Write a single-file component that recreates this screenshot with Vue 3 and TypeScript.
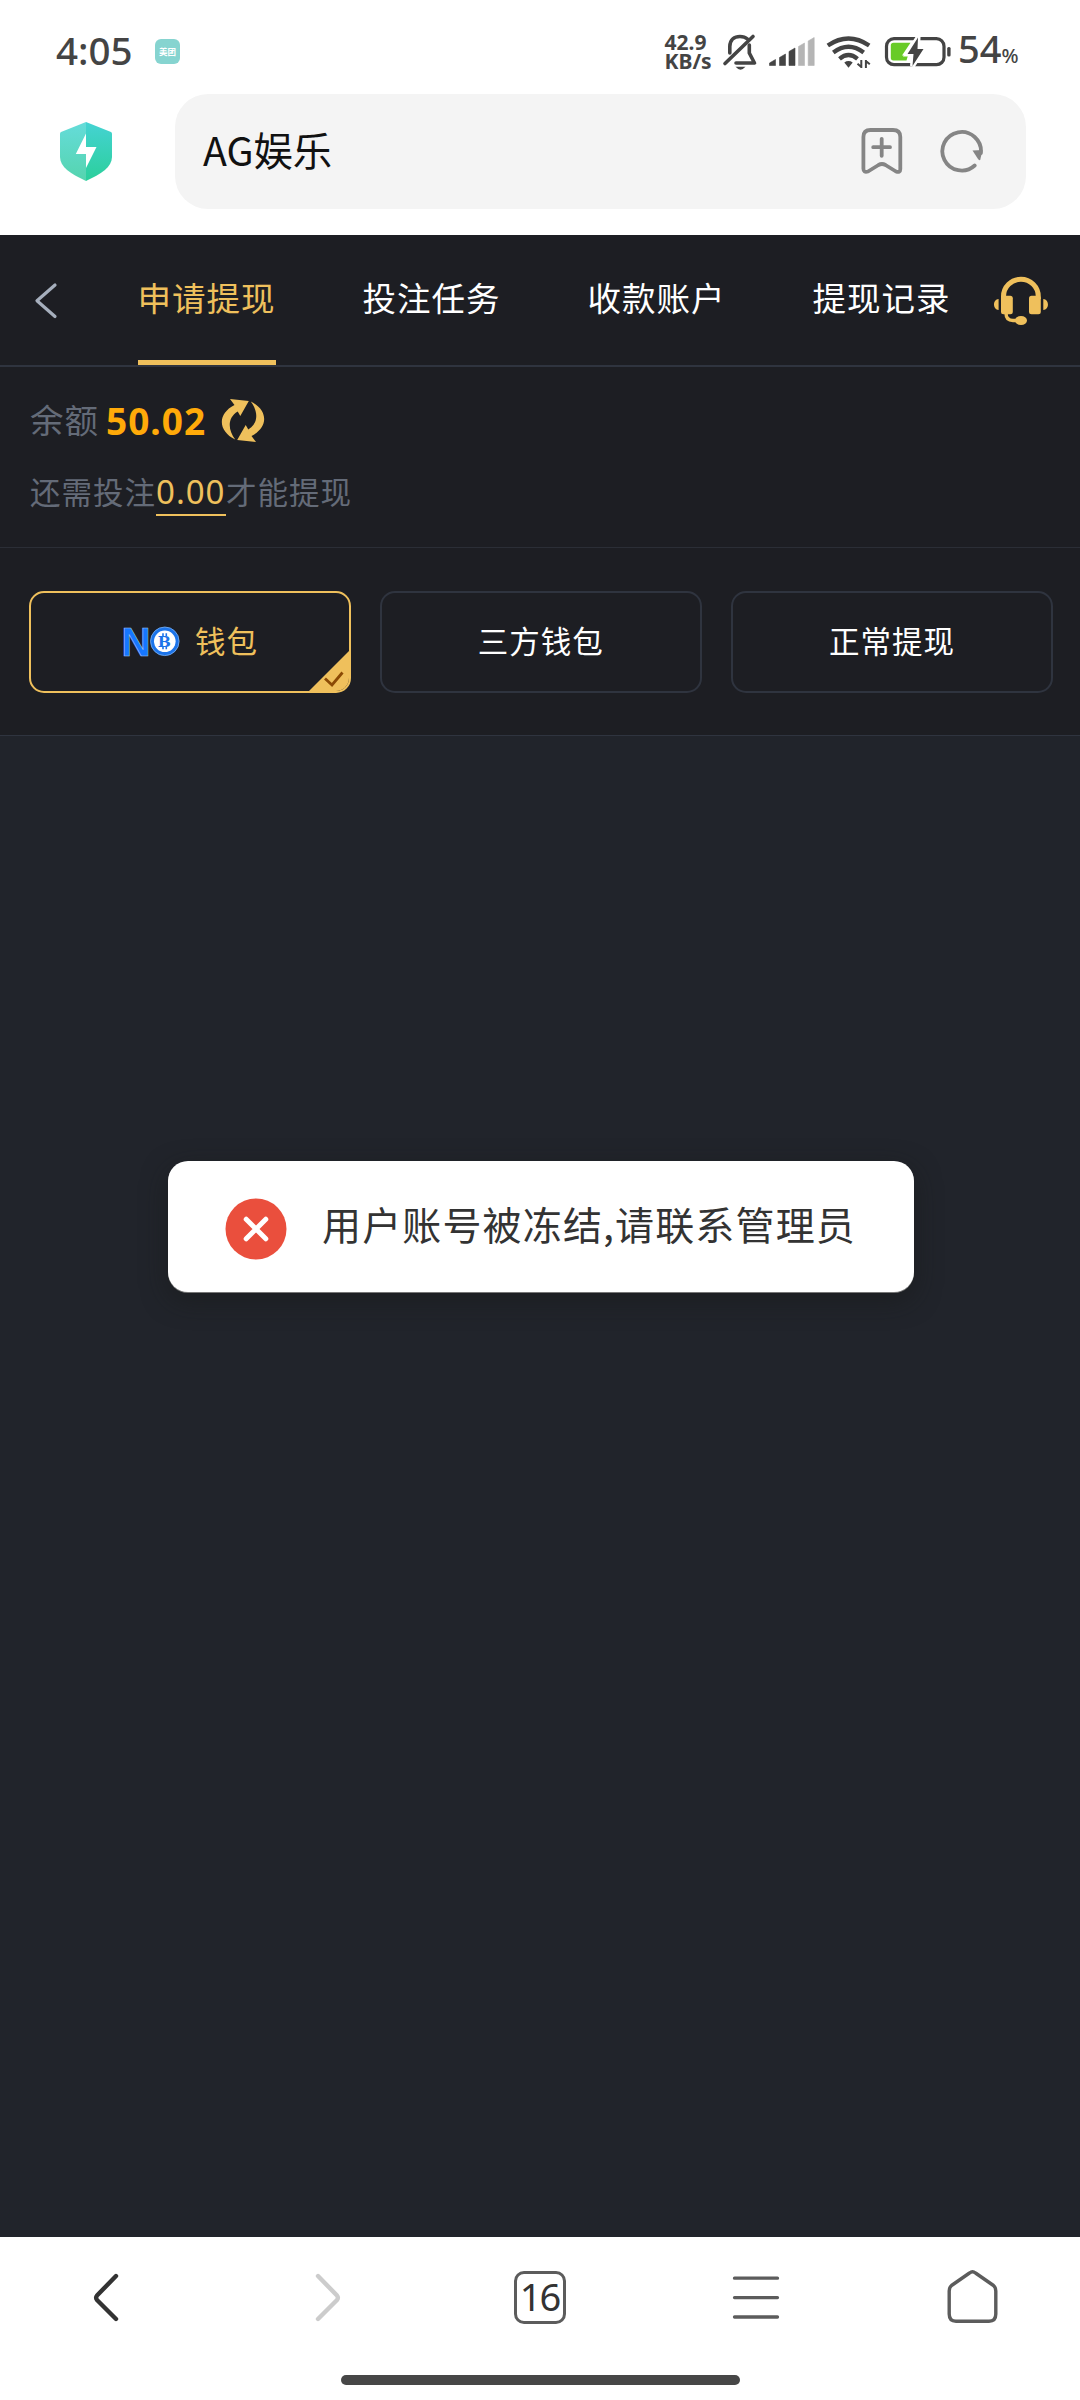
<script setup lang="ts">
import { ref } from 'vue'

interface Signal { x: number; top: number; on: boolean }

const tabs: string[] = ['申请提现', '投注任务', '收款账户', '提现记录']
const activeTab = ref(0)

const methods: string[] = ['钱包', '三方钱包', '正常提现']
const activeMethod = ref(0)

const signal: Signal[] = [
  { x: 770, top: 59.5, on: true },
  { x: 780, top: 54, on: true },
  { x: 789.5, top: 48, on: true },
  { x: 799, top: 43, on: false },
  { x: 808.7, top: 37.5, on: false },
]
</script>

<template>
  <div class="screen">
    <header class="status">
      <span class="time">4:05</span>
      <span class="app-badge">美团</span>
      <span class="speed"><b>42.9</b><b>KB/s</b></span>
      <svg class="bell" width="36" height="40" viewBox="722 31 36 40" fill="none" stroke="#444" stroke-width="3.6" stroke-linecap="round" stroke-linejoin="round">
        <path d="M729.8 52V45.500C730 38.500 734.500 35.500 740 35.500C743 35.500 745.500 36.300 747.500 38M749.300 44V52L754.500 62H736" />
        <path d="M753 35.500L725 62.500" />
        <path d="M735.500 65.800H745.500Q740.500 71.500 735.500 65.800Z" fill="#444" stroke="none" />
      </svg>
      <svg class="signal" width="46" height="30" viewBox="769.500 37 46 30">
        <path v-for="s in signal" :key="s.x" :d="`M${s.x} ${s.top + 3.5}L${s.x + 6} ${s.top}V65.500H${s.x}Z`" :fill="s.on ? '#444' : '#b5b5b5'" :stroke="s.on ? '#444' : '#b5b5b5'" stroke-width=".6" stroke-linejoin="round" />
      </svg>
      <svg class="wifi" width="46" height="34" viewBox="826.500 34 46 34" fill="none" stroke="#444" stroke-width="4.300">
        <path d="M828.300 44.500Q849 30.500 869.700 44.500" />
        <path d="M833.800 51.500Q849 40 864.200 51.500" />
        <path d="M840 57.800Q849 50.300 858 57.800" />
        <path d="M844.800 61.500Q849 58.600 853.200 61.500L849 66.800Z" fill="#444" stroke="none" />
        <path d="M861.800 59V67M861.800 66L858 62.800M866.400 67V59M866.400 60L870.300 63.300" stroke-width="2" />
      </svg>
      <svg class="battery" width="68" height="32" viewBox="884.500 35 68 32">
        <rect x="887" y="37.700" width="57.500" height="26" rx="7.500" fill="none" stroke="#444" stroke-width="3.200" />
        <path d="M894 41.800H911L902.500 54.500H908.500L907 59.500H894Q891.300 59.500 891.300 56.800V44.500Q891.300 41.800 894 41.800Z" fill="#68cb27" />
        <path d="M918.500 36.500L908 53H914L913 65L924 48H918Z" fill="#444" stroke="#fff" stroke-width="5" paint-order="stroke" />
        <rect x="947.700" y="46" width="3.400" height="9.500" rx="1.500" fill="#444" />
      </svg>
      <span class="percent">54<small>%</small></span>
    </header>

    <div class="address">
      <svg class="shield" width="54" height="62" viewBox="59 121 54 62">
        <defs>
          <linearGradient id="shieldLeft" x1="0" y1="0" x2="0" y2="1"><stop stop-color="#65dcda" /><stop offset="1" stop-color="#55d4ae" /></linearGradient>
          <linearGradient id="shieldRight" x1="0" y1="0" x2="0" y2="1"><stop stop-color="#45d3d3" /><stop offset="1" stop-color="#2bcf9b" /></linearGradient>
        </defs>
        <path d="M86 122L61 132Q60 132.500 60 134V157C60 167 71 174 86 181Z" fill="url(#shieldLeft)" />
        <path d="M86 122L111 132Q112 132.500 112 134V157C112 167 101 174 86 181Z" fill="url(#shieldRight)" />
        <path d="M86 133.500L75.800 154H86V168L96.500 147H86Z" fill="#fff" />
      </svg>
      <div class="search">
        <span class="site">AG娱乐</span>
        <svg width="42" height="48" viewBox="861.500 127 42 48" fill="none" stroke="#858585" stroke-width="3.800" stroke-linecap="round" stroke-linejoin="round">
          <path d="M863.900 137Q863.900 130 871 130H893.500Q900.800 130 900.800 137V169Q900.800 173 896.500 171.500L886 165Q882.400 163 879 165L868.500 171.500Q863.900 173 863.900 168.500Z" />
          <path d="M873.700 147.200H890.500M882.200 138.800V155.800" />
        </svg>
        <svg class="reload" width="44" height="44" viewBox="941 129 44 44">
          <path d="M975.700 165.500A19.300 19.300 0 1 1 981.900 153" fill="none" stroke="#858585" stroke-width="3.800" stroke-linecap="round" />
          <path d="M973.500 150.500L983.500 150L981.200 160Q980 160.500 979 159Z" fill="#858585" />
        </svg>
      </div>
    </div>

    <main>
      <nav class="tabs">
        <svg class="back" width="26" height="40" viewBox="33 281 26 40" fill="none" stroke="#a6afbd" stroke-width="3.200" stroke-linecap="round" stroke-linejoin="round"><path d="M55 285L37 300.700L55 316.500" /></svg>
        <div class="tab-list">
          <button v-for="(tab, i) in tabs" :key="tab" :class="{ active: i === activeTab }" @click="activeTab = i">{{ tab }}</button>
        </div>
        <svg class="service" width="56" height="50" viewBox="993 275 56 50" fill="#efc05c">
          <path d="M1003.500 298V295.500A17.400 17.200 0 0 1 1038.300 295.500V298" fill="none" stroke="#efc05c" stroke-width="5" />
          <rect x="1001" y="294.700" width="11.800" height="18.500" rx="2.500" />
          <rect x="1029" y="294.700" width="11.800" height="18.500" rx="2.500" />
          <path d="M998.600 298V309C992.500 308.500 992.500 298.500 998.600 298ZM1043.300 298V309C1049.500 308.500 1049.500 298.500 1043.300 298Z" />
          <path d="M1006 312Q1006 319.500 1013 319.500H1019" fill="none" stroke="#efc05c" stroke-width="3.400" />
          <ellipse cx="1021" cy="319.500" rx="6" ry="4.600" />
        </svg>
      </nav>

      <section class="balance">
        <div class="amount">
          <span>余额</span><strong>50.02</strong>
          <svg width="44" height="45" viewBox="221 398 44 45" fill="#efc05c">
            <path d="M230 399L248.800 401L240.300 416L237.700 411.500C227 418 228 430 235.200 439.500C218 431 217 414 234.500 405Z" />
            <path d="M230 399L248.800 401L240.300 416L237.700 411.500C227 418 228 430 235.200 439.500C218 431 217 414 234.500 405Z" transform="rotate(180 243 420.500)" />
          </svg>
        </div>
        <p class="need">还需投注<u>0.00</u>才能提现</p>
      </section>

      <section class="methods">
        <button v-for="(m, i) in methods" :key="m" :class="['method', { active: i === activeMethod }]" @click="activeMethod = i">
          <svg v-if="i === 0" class="logo" width="60" height="32" viewBox="121 626 60 32">
            <text x="121.500" y="655.800" textLength="30" lengthAdjust="spacingAndGlyphs" font-family="Liberation Sans, sans-serif" font-weight="700" font-size="41" fill="#1677ff" stroke="#9cc4f5" stroke-width=".6">N</text>
            <circle cx="164.800" cy="641.300" r="14.300" fill="#1c74ea" stroke="#7fb2f3" stroke-width=".8" />
            <circle cx="164.800" cy="641.300" r="10.800" fill="#fff" />
            <text x="164.800" y="647" text-anchor="middle" font-family="DejaVu Serif, serif" font-weight="700" font-size="15.500" fill="#1c74ea">B</text>
            <path d="M163 633.200V636M166.300 633.200V636M163 646.500V649.300M166.300 646.500V649.300" stroke="#1c74ea" stroke-width="1.600" />
          </svg>
          <span>{{ m }}</span>
          <svg v-if="i === activeMethod" class="tick" width="42" height="42" viewBox="0 0 42 42">
            <path d="M42 0V42H0Z" fill="#efc05c" />
            <path d="M17 28.500L24 35L34.500 22.500" fill="none" stroke="#8b4a05" stroke-width="2.800" />
          </svg>
        </button>
      </section>
    </main>

    <div class="toast">
      <svg width="62" height="62" viewBox="0 0 62 62">
        <circle cx="31" cy="31" r="30.500" fill="#ea4f3d" />
        <path d="M21.200 21.200L40.800 40.800M40.800 21.200L21.200 40.800" stroke="#fff" stroke-width="5" stroke-linecap="round" />
      </svg>
      <span>用户账号被冻结,请联系管理员</span>
    </div>

    <footer class="toolbar">
      <div class="actions">
        <svg width="52" height="56" viewBox="80 2269 52 56" fill="none" stroke="#333" stroke-width="4.400" stroke-linecap="round" stroke-linejoin="round"><path d="M116 2276L97 2295.500Q95.300 2297.700 97 2300L116 2319" /></svg>
        <svg class="forward" width="52" height="56" viewBox="302 2269 52 56" fill="none" stroke="#ccc" stroke-width="4.400" stroke-linecap="round" stroke-linejoin="round"><path d="M318 2276L337 2295.500Q338.700 2297.700 337 2300L318 2319" /></svg>
        <span class="count">16</span>
        <svg class="menu" width="52" height="56" viewBox="730 2269 52 56" stroke="#5c5c5c" stroke-width="3.300" stroke-linecap="round"><path d="M734.500 2278.200H777.500M734.500 2297.600H777.500M734.500 2317H777.500" /></svg>
        <svg class="home" width="54" height="56" viewBox="945 2269 54 56" fill="none" stroke="#5c5c5c" stroke-width="3.400" stroke-linejoin="round"><path d="M969.500 2273L951.500 2285.500Q949.200 2287.500 949.200 2291V2314Q949.200 2321.200 956 2321.200H989Q995.800 2321.200 995.800 2314V2291Q995.800 2287.500 993.500 2285.500L975.500 2273Q972.500 2270.700 969.500 2273Z" /></svg>
      </div>
      <i class="home-pill"></i>
    </footer>
  </div>
</template>

<style>
body { background: #fff; }
</style>

<style scoped>
.screen {
  position: relative;
  box-sizing: border-box;
  display: flex;
  flex-direction: column;
  width: 1080px;
  height: 2400px;
  overflow: hidden;
  background: #fff;
  font-family: "Noto Sans", "Noto Sans CJK SC", sans-serif;
}
svg { display: block; flex: none; }
button { margin: 0; padding: 0; border: 0; background: none; color: inherit; font: inherit; }
.status {
  display: flex;
  align-items: center;
  height: 94px;
  padding: 9px 0 0 56px;
  box-sizing: border-box;
  color: #444;
}
.time { width: 99px; margin-top: -3px; font-size: 38.500px; font-weight: 500; line-height: 50px; }
.app-badge {
  width: 25px;
  height: 25px;
  border-radius: 6px;
  background: #86d4d0;
  color: #fff;
  font: 700 8.5px/25px "Noto Sans CJK SC", sans-serif;
  text-align: center;
}
.speed { width: 57px; margin: 1px 0 0 484.500px; font-size: 21px; line-height: 19px; }
.speed b { display: block; font-weight: 700; }
.signal { margin-left: 11.500px; }
.wifi { margin-left: 11px; }
.battery { margin-left: 12px; }
.percent { margin-left: 6px; font-size: 38px; font-weight: 500; line-height: 50px; white-space: nowrap; }
.percent small { font-size: 20px; }
.address { display: flex; height: 141px; }
.shield { margin: 27px 62px 0 59px; }
.search {
  display: flex;
  align-items: center;
  box-sizing: border-box;
  width: 851px;
  height: 115px;
  padding: 0 42px 0 28px;
  border-radius: 33px;
  background: #f4f4f4;
}
.search svg { margin-top: -1px; }
.site { flex: 1; margin-top: -6px; color: #111; font: 400 39.300px/60px "Noto Sans CJK SC", sans-serif; }
.search .reload { margin-left: 37.500px; }
main { display: flex; flex-direction: column; height: 2002px; background: #21242b; }
.tabs {
  display: flex;
  box-sizing: border-box;
  height: 132px;
  border-bottom: 2px solid #2f343f;
  background: #1d1e23;
  color: #fff;
}
.back { margin: 46px 78.500px 0 33px; }
.tab-list { display: flex; width: 812px; gap: 87px; }
.tab-list button {
  flex: none;
  width: 138px;
  height: 130px;
  box-sizing: border-box;
  padding-bottom: 6px;
  font: 400 33.500px/50px "Noto Sans CJK SC", sans-serif;
  letter-spacing: 1px;
  white-space: nowrap;
}
.tab-list .active {
  color: #efc05c;
  background: linear-gradient(#efc05c, #efc05c) bottom / 100% 5px no-repeat;
}
.service { margin: 41px 0 0 43.500px; }
.balance {
  box-sizing: border-box;
  height: 181px;
  padding: 27px 30px 0;
  border-bottom: 1px solid #2b2e36;
  background: #1d1e23;
  color: #646b78;
}
.amount { display: flex; align-items: center; height: 54px; }
.amount span { width: 76px; margin-top: -4px; font: 400 33.500px/54px "Noto Sans CJK SC", sans-serif; letter-spacing: 1px; }
.amount strong { width: 115px; color: #ffaa09; font-size: 37px; font-weight: 700; line-height: 54px; letter-spacing: 1px; }
.amount svg { margin-top: -1px; }
.need { margin: 20px 0 0; font: 400 30.500px/46px "Noto Sans CJK SC", sans-serif; letter-spacing: 1px; white-space: nowrap; }
.need u {
  display: inline-block;
  box-sizing: border-box;
  width: 70px;
  height: 46.500px;
  border-bottom: 2.500px solid #efc05c;
  color: #efc05c;
  font-family: "Noto Sans", sans-serif;
  font-size: 33px;
  text-decoration: none;
}
.methods {
  display: flex;
  gap: 29px;
  box-sizing: border-box;
  height: 188px;
  padding: 43px 27px 0 28.500px;
  border-bottom: 1px solid #2f343f;
  background: #1d1e23;
}
.method {
  position: relative;
  display: flex;
  flex: 1;
  align-items: center;
  justify-content: center;
  gap: 14px;
  box-sizing: border-box;
  height: 102px;
  overflow: hidden;
  border: 2px solid #2f343f;
  border-radius: 15px;
  color: #fff;
  font: 400 30.500px/46px "Noto Sans CJK SC", sans-serif;
  letter-spacing: 1px;
}
.method span { margin-top: -4px; }
.logo { margin-top: -1px; }
.method.active { border-color: #efc05c; color: #efc05c; }
.tick { position: absolute; right: -1px; bottom: -1px; }
.toast {
  position: absolute;
  top: 1161px;
  left: 168px;
  display: flex;
  align-items: center;
  gap: 35px;
  box-sizing: border-box;
  width: 746px;
  height: 131px;
  padding: 4px 0 0 57px;
  border-radius: 20px;
  background: #fff;
  box-shadow: 0 1px 0 #777, 0 8px 26px rgba(24, 26, 24, .55);
  color: #333;
  font: 400 39px/60px "Noto Sans CJK SC", sans-serif;
  letter-spacing: 1.150px;
  white-space: nowrap;
}
.toast span { margin-top: -12px; }
.toolbar { display: flex; flex-direction: column; align-items: center; height: 163px; background: #fff; }
.actions {
  display: flex;
  align-items: center;
  box-sizing: border-box;
  width: 1080px;
  height: 120px;
  padding-left: 80px;
}
.forward { margin-left: 170px; }
.count {
  box-sizing: border-box;
  width: 52px;
  height: 53px;
  margin-left: 160px;
  border: 3.500px solid #5c5c5c;
  border-radius: 10px;
  color: #333;
  font-size: 38px;
  line-height: 45px;
  letter-spacing: -2px;
  text-indent: -1px;
  text-align: center;
}
.menu { margin-left: 164px; }
.home { margin-left: 163px; }
.home-pill { width: 399px; height: 10px; margin-top: 18px; border-radius: 5px; background: #474747; }
</style>
